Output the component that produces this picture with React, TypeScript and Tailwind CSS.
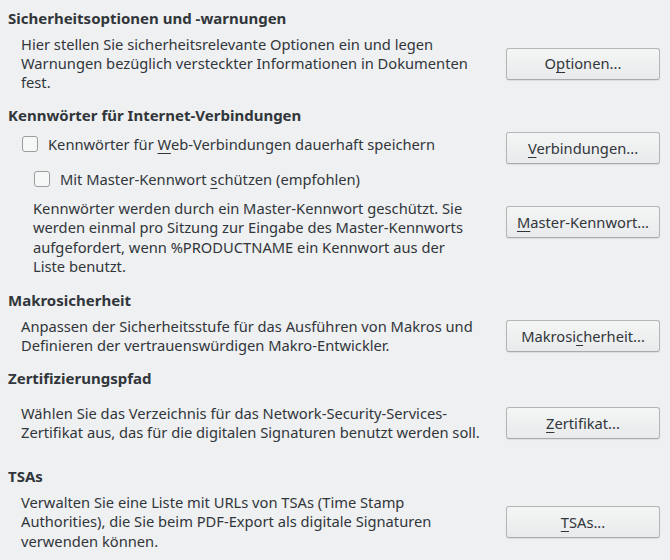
import React from 'react';

const font = { fontFamily: '"Noto Sans", "Open Sans", sans-serif' };

function Heading({ children, className = '' }: { children: React.ReactNode; className?: string }) {
  return <div className={`h-[20px] leading-[20px] text-[15px] font-bold ${className}`}>{children}</div>;
}

function Button({ label, u }: { label: string; u: number }) {
  // u = index of the underlined (mnemonic) letter
  return (
    <button className="w-[154px] h-[32px] shrink-0 rounded-[3px] border border-[#b4b5b6] border-b-[#a9aaab] bg-gradient-to-b from-[#f4f5f5] to-[#e9eaeb] shadow-[0_1px_1px_rgba(0,0,0,0.08)] text-[14.7px] text-[#31363b]">
      {label.slice(0, u)}
      <span className="underline underline-offset-[3px]">{label[u]}</span>
      {label.slice(u + 1)}
    </button>
  );
}

function Check({ label, u }: { label: string; u: number }) {
  return (
    <div className="flex items-center h-[20px]">
      <span className="w-[16px] h-[16px] rounded-[3px] border border-[#9b9c9d] bg-[#f6f7f7] mr-[10px]" />
      <span>
        {label.slice(0, u)}
        <span className="underline underline-offset-[3px]">{label[u]}</span>
        {label.slice(u + 1)}
      </span>
    </div>
  );
}

export default function App() {
  return (
    <div style={font} className="w-[670px] h-[560px] overflow-hidden bg-[#eff0f1] text-[14.7px] text-[#31363b] pl-[8px] pr-[10px]">
      {/* Sicherheitsoptionen */}
      <Heading className="mt-[8px]">Sicherheitsoptionen und -warnungen</Heading>
      <div className="flex items-center justify-between mt-[7px]">
        <p className="pl-[13px] leading-[19px]">
          Hier stellen Sie sicherheitsrelevante Optionen ein und legen<br />
          Warnungen bezüglich versteckter Informationen in Dokumenten<br />
          fest.
        </p>
        <Button label="Optionen..." u={1} />
      </div>

      {/* Kennwörter */}
      <Heading className="mt-[13px]">Kennwörter für Internet-Verbindungen</Heading>
      <div className="flex items-start justify-between mt-[7px]">
        <div className="pl-[14px] mt-[2px]">
          <Check label="Kennwörter für Web-Verbindungen dauerhaft speichern" u={15} />
        </div>
        <Button label="Verbindungen..." u={0} />
      </div>
      <div className="pl-[26px] mt-[5px]">
        <Check label="Mit Master-Kennwort schützen (empfohlen)" u={20} />
      </div>
      <div className="flex items-start justify-between mt-[10px]">
        <p className="pl-[25px] leading-[19.4px]">
          Kennwörter werden durch ein Master-Kennwort geschützt. Sie<br />
          werden einmal pro Sitzung zur Eingabe des Master-Kennworts<br />
          aufgefordert, wenn %PRODUCTNAME ein Kennwort aus der<br />
          Liste benutzt.
        </p>
        <div className="mt-[7px]">
          <Button label="Master-Kennwort..." u={0} />
        </div>
      </div>

      {/* Makrosicherheit */}
      <Heading className="mt-[13px]">Makrosicherheit</Heading>
      <div className="flex items-center justify-between mt-[7px]">
        <p className="pl-[13px] leading-[19.5px]">
          Anpassen der Sicherheitsstufe für das Ausführen von Makros und<br />
          Definieren der vertrauenswürdigen Makro-Entwickler.
        </p>
        <Button label="Makrosicherheit..." u={7} />
      </div>

      {/* Zertifizierungspfad */}
      <Heading className="mt-[12px]">Zertifizierungspfad</Heading>
      <div className="flex items-center justify-between mt-[16px]">
        <p className="pl-[13px] leading-[19.5px]">
          Wählen Sie das Verzeichnis für das Network-Security-Services-<br />
          Zertifikat aus, das für die digitalen Signaturen benutzt werden soll.
        </p>
        <Button label="Zertifikat..." u={0} />
      </div>

      {/* TSAs */}
      <Heading className="mt-[23px]">TSAs</Heading>
      <div className="flex items-center justify-between mt-[7px]">
        <p className="pl-[13px] leading-[19.5px]">
          Verwalten Sie eine Liste mit URLs von TSAs (Time Stamp<br />
          Authorities), die Sie beim PDF-Export als digitale Signaturen<br />
          verwenden können.
        </p>
        <Button label="TSAs..." u={0} />
      </div>
    </div>
  );
}
